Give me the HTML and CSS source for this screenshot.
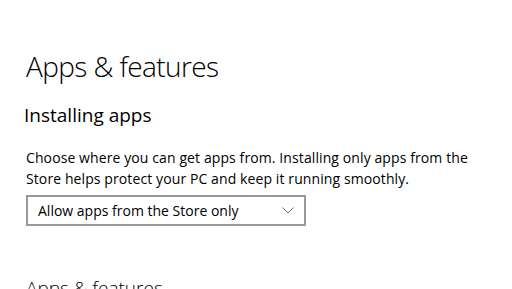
FILE: index.html
```html
<!DOCTYPE html>
<html lang="en">
<head>
    <meta charset="UTF-8">
    <title>Apps &amp; features</title>
    <link rel="stylesheet" href="styles.css">
</head>
<body>
    <div class="page">
        <h1 class="page-title">Apps &amp; features</h1>

        <h2 class="section-title">Installing apps</h2>
        <p class="description">Choose where you can get apps from. Installing only apps from the Store helps protect your PC and keep it running smoothly.</p>

        <div class="select">
            <span class="select-value">Allow apps from the Store only</span>
            <svg class="chevron" width="12" height="7" viewBox="0 0 12 7">
                <path d="M0.5 0.5 L6 6 L11.5 0.5" fill="none" stroke="#666" stroke-width="1"/>
            </svg>
        </div>

        <h2 class="section-title next">Apps &amp; features</h2>
    </div>
</body>
</html>
```

FILE: styles.css
```css
* {
    margin: 0;
    padding: 0;
    box-sizing: border-box;
}

body {
    background-color: #ffffff;
    color: #000000;
    font-family: 'Open Sans', 'Noto Sans', sans-serif;
    overflow: hidden;
}

.page {
    padding: 46px 0 0 26px;
}

.page-title {
    font-size: 28px;
    font-weight: 300;
    line-height: 40px;
    letter-spacing: -0.6px;
}

.section-title {
    font-size: 19px;
    font-weight: 400;
    line-height: 28px;
    margin-top: 15px;
    margin-left: -2px;
}

.section-title.next {
    margin-top: 48px;
    margin-left: 0;
    font-weight: 300;
}

.description {
    font-size: 14px;
    line-height: 21px;
    margin-top: 18px;
    width: 480px;
    letter-spacing: 0.1px;
}

.select {
    display: flex;
    align-items: center;
    justify-content: space-between;
    width: 280px;
    height: 31px;
    margin-top: 6px;
    padding: 0 10px 0 10px;
    border: 2px solid #999999;
    font-size: 14px;
}

.chevron {
    display: block;
}
```
